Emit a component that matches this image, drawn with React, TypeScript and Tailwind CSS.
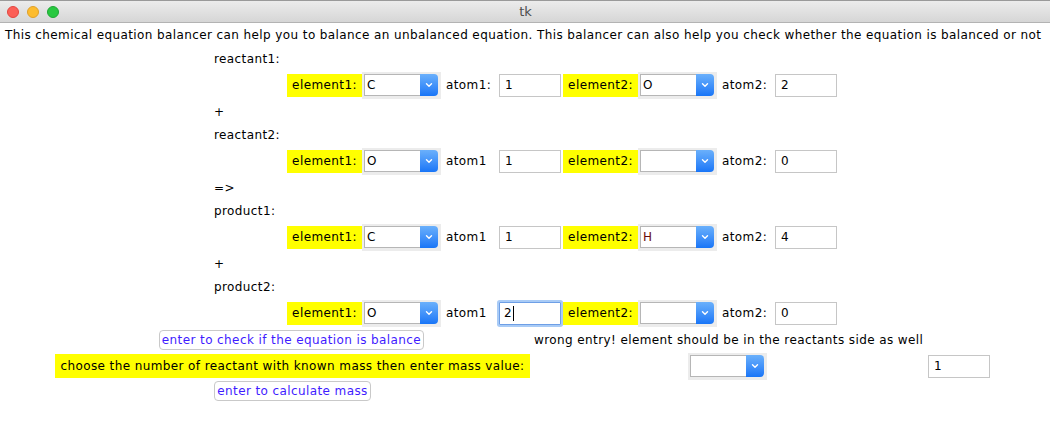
import React from "react";

const FONT = { fontFamily: '"DejaVu Sans", "Liberation Sans", sans-serif' };

function Chevron() {
  return (
    <svg width="8" height="6" viewBox="0 0 8 6" className="block">
      <path d="M1.5 1.8 L4 4.2 L6.5 1.8" fill="none" stroke="#ffffff" strokeWidth="1.4" strokeLinecap="round" strokeLinejoin="round" />
    </svg>
  );
}

function Select({ value, red }: { value: string; red?: boolean }) {
  return (
    <div className="flex h-[27px] w-[79px] shrink-0 items-center bg-[#ececec] pl-[2px]">
      <div className="flex h-[22px] w-[74px] items-stretch">
        <div
          className={`flex flex-1 items-center border border-[#b6b6b6] border-r-0 bg-white pl-[2px] text-[12px] ${
            red ? "text-[#6a0a0a]" : "text-black"
          }`}
        >
          {value}
        </div>
        <div className="flex w-[18px] items-center justify-center rounded-r-[4px] bg-gradient-to-b from-[#6ab0fb] to-[#1775f7]">
          <Chevron />
        </div>
      </div>
    </div>
  );
}

function Yellow({ text, w }: { text: string; w: string }) {
  return (
    <div className={`flex h-[23px] ${w} shrink-0 items-center justify-center bg-[#ffff00] text-[12px] text-black`}>
      {text}
    </div>
  );
}

function Input({ value, focused }: { value: string; focused?: boolean }) {
  if (focused) {
    return (
      <div className="flex h-[23px] w-[62px] shrink-0 items-center rounded-[1px] border border-[#6e9fe6] bg-white pl-[4px] text-[12px] text-black shadow-[0_0_0_2px_#a9cbf6]">
        <span>{value}</span>
        <span className="ml-[1px] inline-block h-[15px] w-px bg-black" />
      </div>
    );
  }
  return (
    <div className="flex h-[23px] w-[62px] shrink-0 items-center border border-[#c6c6c6] bg-white pl-[5px] text-[12px] text-black">
      {value}
    </div>
  );
}

function AtomLabel({ text }: { text: string }) {
  return <div className="w-[58px] shrink-0 pl-[5px] text-[12px] text-black">{text}</div>;
}

function WidgetRow({
  e1,
  a1label,
  a1,
  e2,
  a2,
  focused,
  e2red,
}: {
  e1: string;
  a1label: string;
  a1: string;
  e2: string;
  a2: string;
  focused?: boolean;
  e2red?: boolean;
}) {
  return (
    <div className="flex h-[30px] items-center pl-[287px]">
      <Yellow text="element1:" w="w-[75px]" />
      <Select value={e1} />
      <AtomLabel text={a1label} />
      <Input value={a1} focused={focused} />
      <div className="w-[2px] shrink-0" />
      <Yellow text="element2:" w="w-[75px]" />
      <Select value={e2} red={e2red} />
      <AtomLabel text="atom2:" />
      <Input value={a2} />
    </div>
  );
}

function Label({ text }: { text: string }) {
  return <div className="flex h-[23px] items-center pl-[214px] text-[12px] text-black">{text}</div>;
}

function Button({ text, w }: { text: string; w: string }) {
  return (
    <div
      className={`flex h-[20px] ${w} shrink-0 items-center justify-center rounded-[4px] border border-[#c9c9c9] bg-white text-[12px] text-[#3f1cff] whitespace-nowrap`}
    >
      {text}
    </div>
  );
}

export default function App() {
  return (
    <div className="h-[425px] w-[1050px] overflow-hidden bg-white tracking-[0.4px]" style={FONT}>
      {/* title bar */}
      <div className="relative flex h-[23px] items-center border-b border-[#b3b3b3] border-t border-t-[#9a9a9a] bg-gradient-to-b from-[#ececec] to-[#d6d6d6]">
        <div className="flex gap-[8px] pl-[7px]">
          <div className="h-[12px] w-[12px] rounded-full border border-[#e2463f] bg-[#fc5f57]" />
          <div className="h-[12px] w-[12px] rounded-full border border-[#e0a028] bg-[#fdbc2e]" />
          <div className="h-[12px] w-[12px] rounded-full border border-[#1fa634] bg-[#28c840]" />
        </div>
        <div className="flex-1 text-center text-[13px] text-[#4d4d4d] pr-[58px] tracking-normal">tk</div>
      </div>

      <div className="flex h-[24px] items-center pl-[5px] text-[12px] text-black whitespace-nowrap">
        This chemical equation balancer can help you to balance an unbalanced equation. This balancer can also help you check whether the equation is balanced or not
      </div>

      <Label text="reactant1:" />
      <WidgetRow e1="C" a1label="atom1:" a1="1" e2="O" a2="2" />
      <Label text="+" />
      <Label text="reactant2:" />
      <WidgetRow e1="O" a1label="atom1" a1="1" e2="" a2="0" />
      <Label text="=>" />
      <Label text="product1:" />
      <WidgetRow e1="C" a1label="atom1" a1="1" e2="H" a2="4" e2red />
      <Label text="+" />
      <Label text="product2:" />
      <WidgetRow e1="O" a1label="atom1" a1="2" e2="" a2="0" focused />

      <div className="flex h-[24px] items-start pl-[159px] pt-[2px]">
        <Button text="enter to check if the equation is balance" w="w-[265px]" />
        <div className="ml-[110px] flex h-[20px] items-center text-[12px] text-black whitespace-nowrap">
          wrong entry! element should be in the reactants side as well
        </div>
      </div>

      <div className="flex h-[28px] items-center pl-[55px]">
        <div className="flex h-[24px] w-[475px] shrink-0 items-center justify-center bg-[#ffff00] text-[12px] text-black whitespace-nowrap">
          choose the number of reactant with known mass then enter mass value:
        </div>
        <div className="ml-[158px]">
          <Select value="" />
        </div>
        <div className="ml-[161px]">
          <Input value="1" />
        </div>
      </div>

      <div className="flex h-[22px] items-start pl-[214px] pt-[1px]">
        <Button text="enter to calculate mass" w="w-[157px]" />
      </div>
    </div>
  );
}
